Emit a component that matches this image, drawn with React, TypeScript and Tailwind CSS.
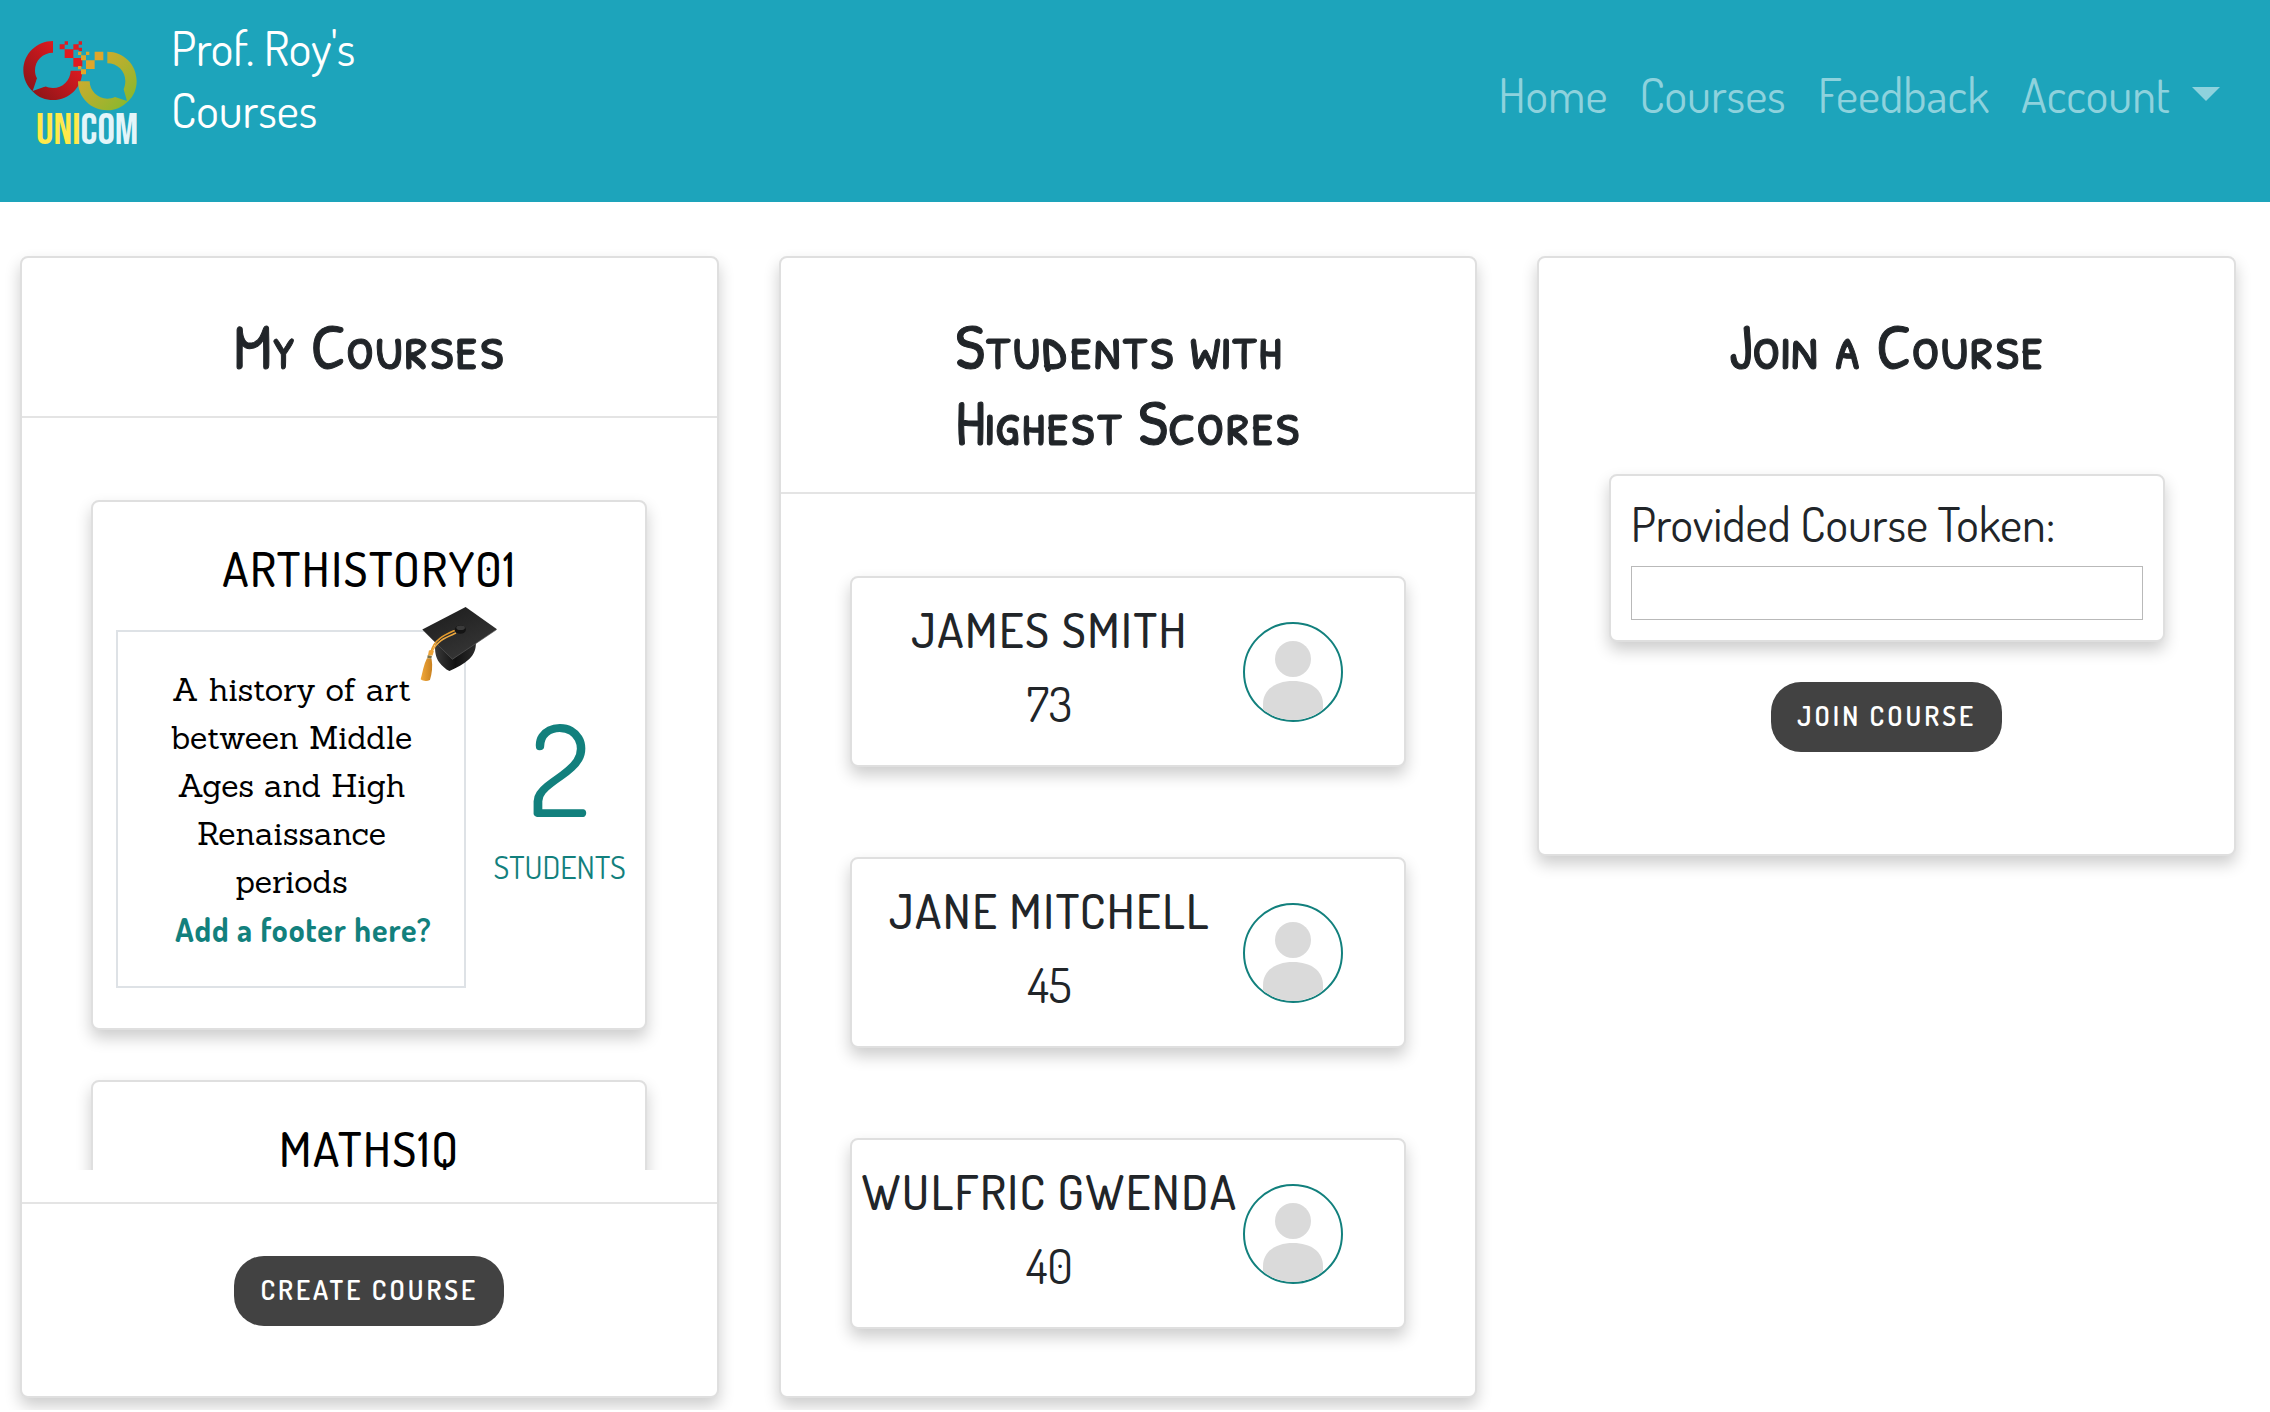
import type { ReactNode } from "react";

type Course = { code: string; description?: string; students?: number };
type Student = { name: string; score: number };

const courses: Course[] = [
  {
    code: "ARTHISTORY01",
    description: "A history of art between Middle Ages and High Renaissance periods",
    students: 2,
  },
  { code: "MATHS1Q" },
];

const students: Student[] = [
  { name: "JAMES SMITH", score: 73 },
  { name: "JANE MITCHELL", score: 45 },
  { name: "WULFRIC GWENDA", score: 40 },
];

function Logo() {
  return (
    <svg viewBox="24 28 340 318" className="mt-6 h-[106px] w-[114px] shrink-0" role="img" aria-label="Unicom">
      <defs>
        <linearGradient id="red" x1="0" y1="1" x2="1" y2="0">
          <stop offset="0.1" stopColor="#8a1518" />
          <stop offset="0.75" stopColor="#dd1a20" />
        </linearGradient>
        <linearGradient id="green" x1="0" y1="0" x2="1" y2="1">
          <stop offset="0.15" stopColor="#d6aa2e" />
          <stop offset="0.85" stopColor="#8db72e" />
        </linearGradient>
      </defs>
      <path
        fill="url(#red)"
        d="M113 31V66C82 66 59 90 59 119C59 128 61 136 65 143L62 173L90 167C97 170 104 172 113 172C142 172 165 149 166 120H201C201 168 163 208 113 208C91 208 69 200 53 183C35 167 24 144 24 119C24 70 64 31 113 31Z"
      />
      <path fill="#1da4bb" d="M65 143L52 181L92 167L76 158Z" />
      <path
        fill="url(#green)"
        d="M276 63C325 63 364 102 364 151C364 175 355 196 339 211C322 229 300 239 276 239C227 239 188 201 188 152H223C223 180 247 204 276 204C284 204 292 202 299 199L335 211L325 176C328 168 330 160 330 151C330 121 306 98 276 98Z"
      />
      <g fill="#e01b22">
        <path d="M133 41h15v15h-15zM148 32h10v10h-10zM148 56h26v26h-26zM174 41h16v16h-16zM190 32h10v10h-10zM190 51h10v10h-10zM174 82h27v26h-27z" />
      </g>
      <g fill="#e0a62a">
        <path d="M188 63h10v10h-10zM212 63h10v10h-10zM197 74h15v15h-15zM238 63h26v26h-26zM212 89h26v26h-26zM188 106h10v10h-10zM197 116h15v15h-15z" />
      </g>
      <text x="62" y="339" fontSize="131" className="font-['Bebas_Neue','Roboto_Condensed',sans-serif]">
        <tspan fill="#ffe94a">UNI</tspan>
        <tspan fill="#e3f5f9">COM</tspan>
      </text>
    </svg>
  );
}

function GraduationCap() {
  return (
    <svg viewBox="30 30 236 230" className="absolute -top-[26px] -right-[34px] h-[76px] w-[78px]" aria-hidden="true">
      <defs>
        <linearGradient id="board" x1="0" y1="0" x2="0.6" y2="1">
          <stop offset="0" stopColor="#1b1b1b" />
          <stop offset="1" stopColor="#363636" />
        </linearGradient>
        <linearGradient id="skull" x1="0" y1="0" x2="1" y2="0">
          <stop offset="0" stopColor="#3a3a3a" />
          <stop offset="0.5" stopColor="#111111" />
          <stop offset="1" stopColor="#2c2c2c" />
        </linearGradient>
        <linearGradient id="tassel" x1="0" y1="0" x2="1" y2="0">
          <stop offset="0" stopColor="#f2a93b" />
          <stop offset="1" stopColor="#c9811f" />
        </linearGradient>
      </defs>
      <path fill="url(#skull)" d="M76 146C74 168 78 187 88 200C97 211 107 221 119 227C140 218 163 207 180 190C194 176 200 160 199 140Z" />
      <path fill="url(#board)" d="M37 101L168 33L263 100L128 192Z" />
      <path fill="none" stroke="#5a5a5a" strokeWidth="2" d="M39 103L128 191L261 102" />
      <ellipse cx="152" cy="101" rx="17" ry="13" fill="#141414" />
      <ellipse cx="153" cy="96" rx="13" ry="7" fill="#3b3b3b" />
      <path fill="none" stroke="#e39a2c" strokeWidth="5" d="M135 104C108 116 72 130 64 168" />
      <path fill="none" stroke="#f0aa40" strokeWidth="5" d="M139 112C112 124 84 132 66 168" />
      <path fill="#eda338" d="M57 165Q64 160 72 167L68 180H54Z" />
      <path fill="#7d7245" d="M53 179L66 181L64 190L52 188Z" />
      <path fill="url(#tassel)" d="M51 188L65 190C69 214 66 236 60 254C50 259 39 257 32 252C38 230 41 208 51 188Z" />
    </svg>
  );
}

function Avatar() {
  return (
    <div className="size-[100px] shrink-0 overflow-hidden rounded-full border-2 border-[#12807d]">
      <svg viewBox="2 2 96 96" className="size-full" aria-hidden="true">
        <circle cx="50" cy="37" r="18" fill="#dadada" />
        <path fill="#dadada" d="M20 100V82C20 68 32 59 50 59S80 68 80 82V100Z" />
      </svg>
    </div>
  );
}

function Panel({ children }: { children: ReactNode }) {
  return (
    <section className="rounded-lg border-2 border-[#dfdfdf] bg-white shadow-[0_8px_16px_rgba(0,0,0,0.2)]">
      {children}
    </section>
  );
}

function PanelHeading({ children, divided = true }: { children: ReactNode; divided?: boolean }) {
  return (
    <header className={divided ? "flex justify-center border-b-2 border-[#e4e4e4] pt-[50px] pb-8" : "flex justify-center pt-[50px] pb-8"}>
      <h2 className="font-['Patrick_Hand_SC','Lato',sans-serif] text-[64px] leading-[76px] font-medium [-webkit-text-stroke:1px]">
        {children}
      </h2>
    </header>
  );
}

function InnerCard({ children }: { children: ReactNode }) {
  return (
    <div className="mx-auto w-4/5 rounded-lg border-2 border-[#dfdfdf] bg-white shadow-[0_8px_16px_rgba(0,0,0,0.2)]">
      {children}
    </div>
  );
}

function PillButton({ children }: { children: ReactNode }) {
  return (
    <button type="button" className="h-[70px] rounded-[30px] bg-[#424242] px-[26px] pb-[3px] text-[27px] font-semibold tracking-[3px] text-white">
      {children}
    </button>
  );
}

function CourseCard({ course }: { course: Course }) {
  return (
    <InnerCard>
      <h3 className="pt-9 text-center text-[48px] leading-[60px] font-[550] tracking-[0.03em] text-black">{course.code}</h3>
      <div className="flex min-h-[398px] pt-8 pb-10 pl-[23px]">
        {course.description && (
          <>
            <div className="relative w-[350px] border-2 border-[#dee2e6] px-8 pt-[34px] pb-8 text-center">
              <GraduationCap />
              <p className="font-['Sanchez','DejaVu_Serif',serif] text-[32px] leading-[48px] text-black">{course.description}</p>
              <p className="pl-6 text-[32px] leading-[48px] font-bold tracking-[0.03em] whitespace-nowrap text-[#12807d]">
                Add a footer here?
              </p>
            </div>
            <div className="ml-[27px] self-center pb-6 text-center text-[#12807d]">
              <p className="text-[128px] leading-[128px]">{course.students}</p>
              <p className="mt-3 text-[32px] leading-[48px]">STUDENTS</p>
            </div>
          </>
        )}
      </div>
    </InnerCard>
  );
}

export default function App() {
  return (
    <div className="font-['Dosis','Lato',sans-serif] font-[450] text-[#212529]">
      <header className="flex items-start justify-between bg-[#1da4bb] pt-4 pr-[34px] pb-14 pl-[23px]">
        <div className="flex items-start gap-[34px]">
          <Logo />
          <h1 className="text-[48px] leading-[62px] font-[450] text-white">
            Prof. Roy's
            <br />
            Courses
          </h1>
        </div>
        <nav className="mt-[47px] flex text-[48px] leading-[62px] text-[#8ed2dd]">
          <a href="#home" className="px-4">Home</a>
          <a href="#courses" className="px-4">Courses</a>
          <a href="#feedback" className="px-4">Feedback</a>
          <a href="#account" className="flex items-center gap-[22px] px-4">
            Account
            <svg viewBox="0 0 28 14" className="h-[14px] w-7" aria-hidden="true">
              <path fill="currentColor" d="M0 0H28L14 14Z" />
            </svg>
          </a>
        </nav>
      </header>

      <main className="grid grid-cols-3 items-start gap-[60px] pt-[54px] pr-[34px] pb-3 pl-5">
        <Panel>
          <PanelHeading>My Courses</PanelHeading>
          <div className="flex h-[752px] flex-col gap-[50px] overflow-y-auto pt-[82px] [scrollbar-width:none] *:shrink-0">
            {courses.map((course) => (
              <CourseCard key={course.code} course={course} />
            ))}
          </div>
          <footer className="mt-8 flex justify-center border-t-2 border-[#e4e4e4] pt-[52px] pb-[70px]">
            <PillButton>CREATE COURSE</PillButton>
          </footer>
        </Panel>

        <Panel>
          <PanelHeading>
            Students with
            <br />
            Highest Scores
          </PanelHeading>
          <div className="flex flex-col gap-[90px] pt-[82px] pb-[67px]">
            {students.map((student) => (
              <InnerCard key={student.name}>
                <div className="flex items-center pr-[61px] pl-1">
                  <div className="flex flex-1 flex-col gap-3 pt-5 pb-[31px] text-center text-[48px] leading-[62px] whitespace-nowrap">
                    <h3 className="font-[550] tracking-[0.03em]">{student.name}</h3>
                    <p>{student.score}</p>
                  </div>
                  <Avatar />
                </div>
              </InnerCard>
            ))}
          </div>
        </Panel>

        <Panel>
          <PanelHeading divided={false}>Join a Course</PanelHeading>
          <form className="flex flex-col items-center pt-[58px] pb-[102px]">
            <InnerCard>
              <div className="flex flex-col gap-3 px-5 pt-4 pb-5">
                <label htmlFor="token" className="text-[48px] leading-[62px]">
                  Provided Course Token:
                </label>
                <input id="token" type="text" className="h-[54px] w-full border border-[#b9b9b9] px-2 text-[32px]" />
              </div>
            </InnerCard>
            <div className="mt-10">
              <PillButton>JOIN COURSE</PillButton>
            </div>
          </form>
        </Panel>
      </main>
    </div>
  );
}
